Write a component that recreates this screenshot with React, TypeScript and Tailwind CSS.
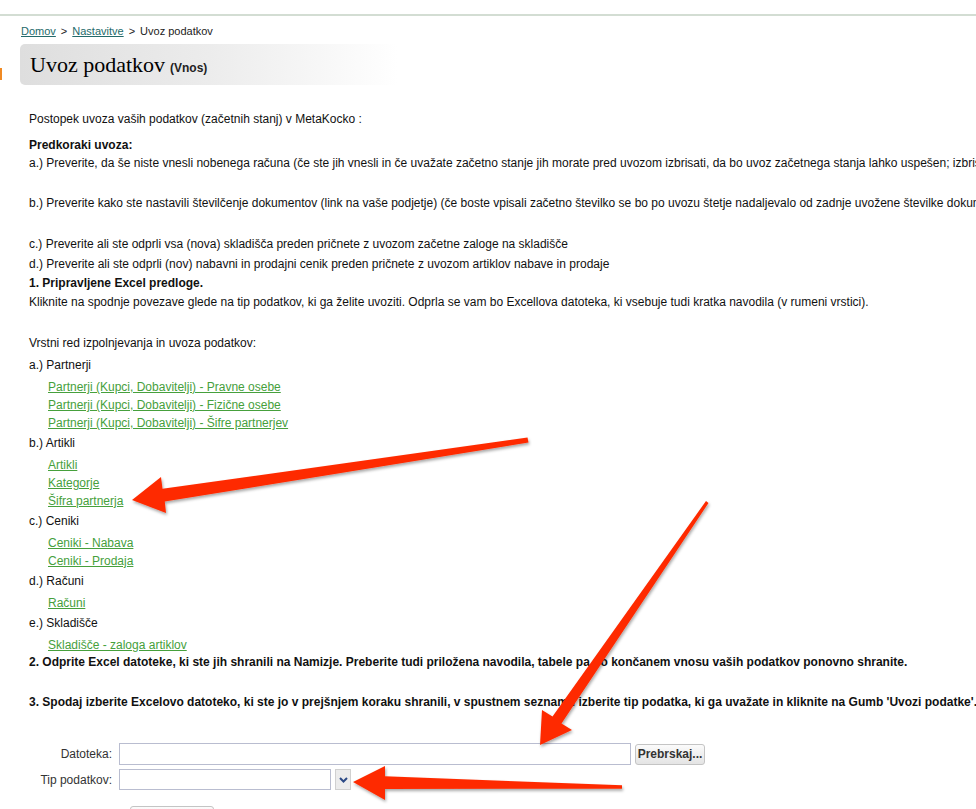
import React from "react";

// ─── Data ─────────────────────────────────────────────────────────────────────

const groups: { title: string; links: string[] }[] = [
  {
    title: "a.) Partnerji",
    links: [
      "Partnerji (Kupci, Dobavitelji) - Pravne osebe",
      "Partnerji (Kupci, Dobavitelji) - Fizične osebe",
      "Partnerji (Kupci, Dobavitelji) - Šifre partnerjev",
    ],
  },
  { title: "b.) Artikli", links: ["Artikli", "Kategorje", "Šifra partnerja"] },
  { title: "c.) Ceniki", links: ["Ceniki - Nabava", "Ceniki - Prodaja"] },
  { title: "d.) Računi", links: ["Računi"] },
  { title: "e.) Skladišče", links: ["Skladišče - zaloga artiklov"] },
];

// ─── Annotation arrows (tapered shaft + head) ────────────────────────────────

const arrows = [
  "132,500 161,477 162.5,488.8 527.5,437.5 528.5,442.5 164.8,501.6 166,513",
  "540,745 542,710 552.5,716.5 706,501 708.5,503 561.5,723.5 572,730",
  "353,782 385,766 385,776.2 622,785.3 622,788.7 385,789 385,800",
];

function Arrows() {
  return (
    <svg
      className="pointer-events-none absolute inset-0"
      width="976"
      height="809"
      viewBox="0 0 976 809"
    >
      <defs>
        <filter id="arrow-shadow" x="-10%" y="-10%" width="120%" height="120%">
          <feDropShadow dx="1" dy="2" stdDeviation="1.6" floodColor="#000" floodOpacity="0.35" />
        </filter>
      </defs>
      {arrows.map((pts) => (
        <polygon key={pts} points={pts} fill="#fe2c06" strokeLinejoin="round" filter="url(#arrow-shadow)" />
      ))}
    </svg>
  );
}

// ─── Page ─────────────────────────────────────────────────────────────────────

export default function App() {
  return (
    <div
      className="relative h-[809px] w-full overflow-hidden bg-white text-[12px] text-[#111]"
      style={{ fontFamily: '"Liberation Sans", Arial, sans-serif' }}
    >
      {/* top strip */}
      <div className="h-[16px] border-b-2 border-[#d3ddd3]" />

      {/* sidebar marker peeking in */}
      <div className="absolute left-0 top-[68px] h-[12px] w-[2px] bg-[#f08a24]" />

      {/* breadcrumb */}
      <div className="mt-[8px] flex h-[14px] items-center gap-[5px] pl-[21px] text-[11px] leading-[14px] text-[#222]">
        <a className="text-[#236a6a] underline" href="#">Domov</a>
        <span>&gt;</span>
        <a className="text-[#236a6a] underline" href="#">Nastavitve</a>
        <span>&gt;</span>
        <span>Uvoz podatkov</span>
      </div>

      {/* title box */}
      <div className="ml-[20px] mt-[6px] flex h-[41px] w-[378px] items-center rounded-[5px] bg-gradient-to-r from-[#dedede] via-[#ececec] to-white pl-[10px] pt-[1px]">
        <span className="text-[22px] leading-none text-black" style={{ fontFamily: '"Liberation Serif", Georgia, serif' }}>
          Uvoz podatkov
        </span>
        <span className="ml-[5px] mt-[6px] text-[12px] font-bold leading-none text-[#222]">(Vnos)</span>
      </div>

      {/* body */}
      <div className="whitespace-nowrap pl-[29px]">
        <div className="mt-[24px] h-[20px] leading-[20px]">
          Postopek uvoza vaših podatkov (začetnih stanj) v MetaKocko :
        </div>
        <div className="mt-[7px] h-[18px] font-bold leading-[18px]">Predkoraki uvoza:</div>
        <div className="h-[18px] leading-[18px]">
          a.) Preverite, da še niste vnesli nobenega računa (če ste jih vnesli in če uvažate začetno stanje jih morate pred uvozom izbrisati, da bo uvoz začetnega stanja lahko uspešen; izbrisane račune lahko po uvozu ponovno vnesete)
        </div>
        <div className="mt-[21px] h-[20px] leading-[20px]">
          b.) Preverite kako ste nastavili številčenje dokumentov (link na vaše podjetje) (če boste vpisali začetno številko se bo po uvozu štetje nadaljevalo od zadnje uvožene številke dokumenta)
        </div>
        <div className="mt-[21px] h-[20px] leading-[20px]">
          c.) Preverite ali ste odprli vsa (nova) skladišča preden pričnete z uvozom začetne zaloge na skladišče
        </div>
        <div className="h-[20px] leading-[20px]">
          d.) Preverite ali ste odprli (nov) nabavni in prodajni cenik preden pričnete z uvozom artiklov nabave in prodaje
        </div>
        <div className="h-[18px] font-bold leading-[18px]">1. Pripravljene Excel predloge.</div>
        <div className="h-[20px] leading-[20px]">
          Kliknite na spodnje povezave glede na tip podatkov, ki ga želite uvoziti. Odprla se vam bo Excellova datoteka, ki vsebuje tudi kratka navodila (v rumeni vrstici).
        </div>

        <div className="mt-[21px] h-[20px] leading-[20px]">Vrstni red izpolnjevanja in uvoza podatkov:</div>

        <div className="mt-[2px]">
          {groups.map((g, i) => (
            <div key={g.title}>
              <div className="h-[20px] leading-[20px]">{g.title}</div>
              <div className={`pl-[19px] pt-[3px] ${i < groups.length - 1 ? "pb-[1px]" : ""}`}>
                {g.links.map((l) => (
                  <div key={l} className="h-[18px] leading-[18px]">
                    <a href="#" className="text-[#46a03c] underline decoration-[#46a03c]">
                      {l}
                    </a>
                  </div>
                ))}
              </div>
            </div>
          ))}
        </div>

        <div className="h-[16px] font-bold leading-[16px]">
          2. Odprite Excel datoteke, ki ste jih shranili na Namizje. Preberite tudi priložena navodila, tabele pa po končanem vnosu vaših podatkov ponovno shranite.
        </div>
        <div className="mt-[22px] h-[20px] font-bold leading-[20px]">
          3. Spodaj izberite Excelovo datoteko, ki ste jo v prejšnjem koraku shranili, v spustnem seznamu izberite tip podatka, ki ga uvažate in kliknite na Gumb 'Uvozi podatke'.
        </div>

        {/* upload form */}
        <div className="mt-[31px] flex flex-col gap-[4px] text-[#333]">
          <div className="flex items-center">
            <label className="w-[84px] pr-[1px] text-right">Datoteka:</label>
            <div className="ml-[6px] h-[22px] w-[512px] border border-[#b9bdd0] bg-white" />
            <button className="ml-[4px] h-[21px] w-[70px] rounded-[3px] border border-[#c4c4c4] bg-gradient-to-b from-[#fbfbfb] to-[#e4e4e4] text-[12px] font-bold text-[#333]">
              Prebrskaj...
            </button>
          </div>
          <div className="flex items-center">
            <label className="w-[84px] pr-[1px] text-right">Tip podatkov:</label>
            <div className="ml-[6px] h-[21px] w-[212px] border border-[#b9bdd0] bg-white" />
            <div className="ml-[4px] flex h-[21px] w-[16px] items-center justify-center border border-[#d0d0d0] bg-[#ececec]">
              <svg width="9" height="6" viewBox="0 0 9 6">
                <path d="M1 1 L4.5 4.5 L8 1" fill="none" stroke="#2c4a86" strokeWidth="2" />
              </svg>
            </div>
          </div>
          <div className="ml-[101px] mt-[12px] h-[22px] w-[84px] rounded-[3px] border border-[#c4c4c4] bg-gradient-to-b from-[#fbfbfb] to-[#e4e4e4]" />
        </div>
      </div>

      <Arrows />
    </div>
  );
}
